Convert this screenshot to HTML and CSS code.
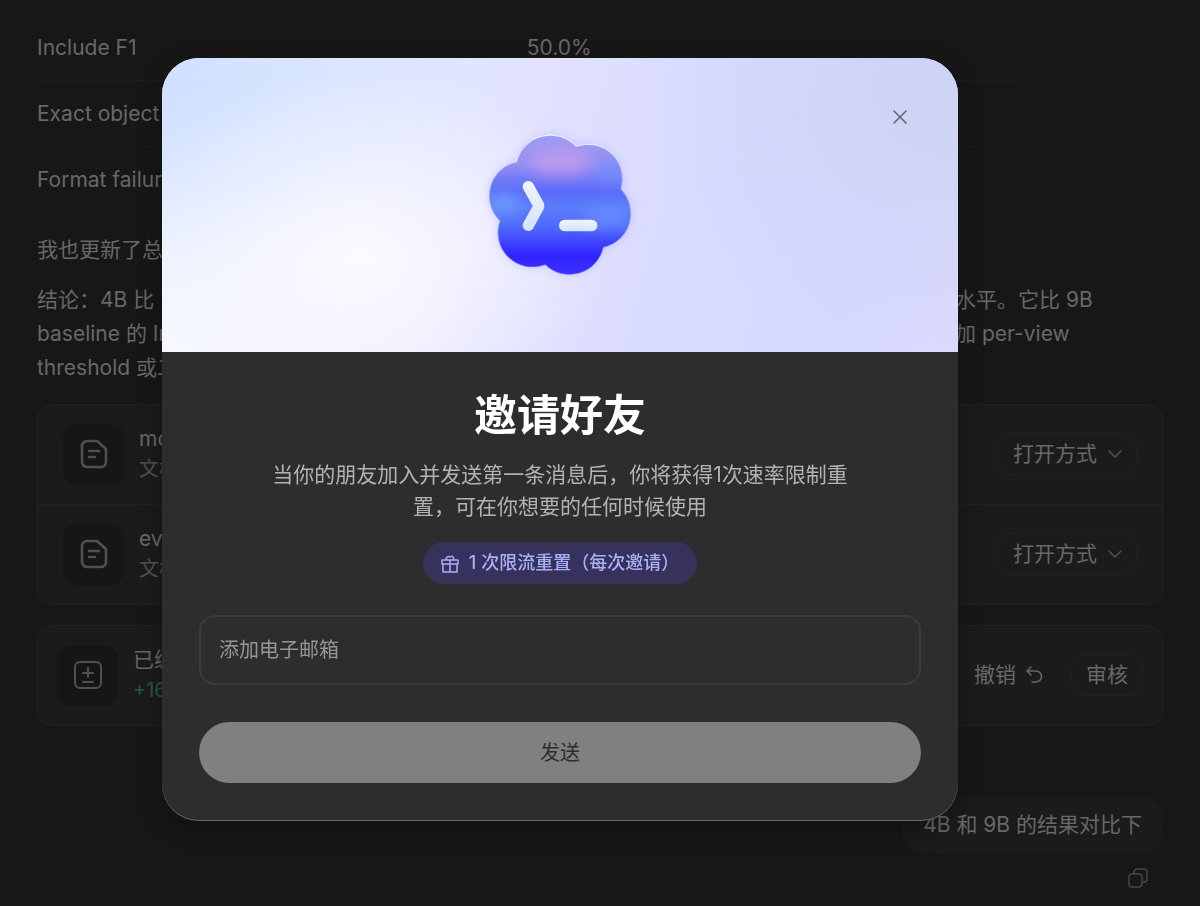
FILE: index.html
```html
<!DOCTYPE html>
<html lang="zh-CN">
  <head>
    <meta charset="UTF-8" />
    <meta name="viewport" content="width=device-width, initial-scale=1" />
    <title>邀请好友</title>
    <link rel="stylesheet" href="styles.css">
  </head>
  <body>
    <main class="chat">
      <table class="metrics">
        <tr><td>Include F1</td><td>50.0%</td></tr>
        <tr><td>Exact object</td><td></td></tr>
        <tr><td>Format failure</td><td></td></tr>
      </table>

      <p class="text">我也更新了总</p>
      <div class="text split">
        <span>结论：4B 比</span><span>水平。它比 9B</span>
        <span>baseline 的 In</span><span>加 per-view</span>
        <span>threshold 或二</span>
      </div>

      <div class="card">
        <div class="file">
          <div class="tile">
            <svg width="28" height="30" viewBox="0 0 28 30"><path d="M8 2h9l9 8v13a5 5 0 0 1-5 5H7a5 5 0 0 1-5-5V7a5 5 0 0 1 5-5zM9 12h10M9 18h6" /></svg>
          </div>
          <div class="file-name">mo<small>文档</small></div>
          <button class="btn" type="button">打开方式
            <svg class="thin" width="14" height="9" viewBox="0 0 14 9"><path d="M1 1l6 6 6-6" /></svg>
          </button>
        </div>
        <div class="file">
          <div class="tile">
            <svg width="28" height="30" viewBox="0 0 28 30"><path d="M8 2h9l9 8v13a5 5 0 0 1-5 5H7a5 5 0 0 1-5-5V7a5 5 0 0 1 5-5zM9 12h10M9 18h6" /></svg>
          </div>
          <div class="file-name">ev<small>文档</small></div>
          <button class="btn" type="button">打开方式
            <svg class="thin" width="14" height="9" viewBox="0 0 14 9"><path d="M1 1l6 6 6-6" /></svg>
          </button>
        </div>
      </div>

      <div class="card">
        <div class="file changes">
          <div class="tile">
            <svg width="28" height="28" viewBox="0 0 28 28"><rect x="1" y="1" width="26" height="26" rx="5" /><path d="M14 7v9M9 12h10M9 21h10" /></svg>
          </div>
          <div class="file-name">已编<small class="added">+16</small></div>
          <button class="undo" type="button">撤销
            <svg class="thin" width="18" height="18" viewBox="0 0 18 18"><path d="M6 1L2 5l4 4M2 5h9a5 5 0 0 1 0 11H7" /></svg>
          </button>
          <button class="btn" type="button">审核</button>
        </div>
      </div>

      <div class="message">4B 和 9B 的结果对比下</div>
      <button class="copy" type="button" aria-label="复制">
        <svg class="thin" width="20" height="20" viewBox="0 0 20 20"><rect x="1" y="6" width="13" height="13" rx="3" /><path d="M6 6V4a3 3 0 0 1 3-3h7a3 3 0 0 1 3 3v7a3 3 0 0 1-3 3h-2" /></svg>
      </button>
    </main>

    <div class="overlay">
      <form class="modal" role="dialog" aria-labelledby="title">
        <div class="hero">
          <button class="close" type="button" aria-label="关闭">
            <svg class="thin" width="14" height="14" viewBox="0 0 14 14"><path d="M1 1l12 12M13 1L1 13" /></svg>
          </button>
          <svg class="logo" width="200" height="190" viewBox="0 0 600 570">
            <defs>
              <linearGradient id="fill" x1="0" y1="75" x2="0" y2="495" gradientUnits="userSpaceOnUse">
                <stop offset="0" stop-color="#9b9df5" />
                <stop offset="0.2" stop-color="#9690f3" />
                <stop offset="0.4" stop-color="#5b6bf9" />
                <stop offset="0.52" stop-color="#5a7cfb" />
                <stop offset="0.66" stop-color="#5068fb" />
                <stop offset="0.86" stop-color="#3024ff" />
                <stop offset="1" stop-color="#3a30ff" />
              </linearGradient>
              <linearGradient id="edge" x1="0" y1="75" x2="0" y2="495" gradientUnits="userSpaceOnUse">
                <stop offset="0" stop-color="#fff" />
                <stop offset="0.3" stop-color="#c5d0ff" stop-opacity="0.8" />
                <stop offset="0.6" stop-color="#8ea6ff" stop-opacity="0.4" />
                <stop offset="1" stop-color="#7d7dff" stop-opacity="0.6" />
              </linearGradient>
              <linearGradient id="glyph" x1="0" y1="0" x2="0" y2="1">
                <stop offset="0" stop-color="#eef5ff" />
                <stop offset="1" stop-color="#d5e2f9" />
              </linearGradient>
              <filter id="soft" x="-100%" y="-150%" width="300%" height="400%"><feGaussianBlur stdDeviation="24" /></filter>
              <filter id="shadow" x="-20%" y="-20%" width="140%" height="140%"><feGaussianBlur stdDeviation="14" /></filter>
              <path id="flower" d="M170 155A104 104 0 0 1 348 109A104 104 0 0 1 483 238A104 104 0 0 1 430 412A104 104 0 0 1 256 464A104 104 0 0 1 120 332A104 104 0 0 1 170 155Z" />
              <clipPath id="clip"><use href="#flower" /></clipPath>
            </defs>
            <use href="#flower" fill="#7b7cf5" opacity="0.3" filter="url(#shadow)" />
            <use href="#flower" fill="url(#fill)" />
            <g clip-path="url(#clip)">
              <ellipse cx="300" cy="155" rx="95" ry="38" fill="#c79cec" opacity="0.8" filter="url(#soft)" />
              <ellipse cx="130" cy="280" rx="60" ry="32" fill="#749dff" opacity="0.8" filter="url(#soft)" />
              <ellipse cx="440" cy="320" rx="75" ry="28" fill="#6d95ff" opacity="0.8" filter="url(#soft)" />
              <ellipse cx="455" cy="185" rx="38" ry="30" fill="#6d8fff" filter="url(#soft)" />
            </g>
            <use href="#flower" fill="none" stroke="url(#edge)" stroke-width="3" />
            <path d="M205 213C211 213 217 216 220 222L250 276Q256 288 250 299L220 354A17 17 0 0 1 190 338L218 288L190 238A17 17 0 0 1 205 213Z" fill="url(#glyph)" />
            <rect x="297" y="329" width="115" height="35" rx="17" fill="url(#glyph)" />
          </svg>
        </div>
        <div class="content">
          <h1 id="title">邀请好友</h1>
          <p class="desc">当你的朋友加入并发送第一条消息后，你将获得1次速率限制重<br>置，可在你想要的任何时候使用</p>
          <div class="badge">
            <svg class="thin" width="18" height="19" viewBox="0 0 18 19"><path d="M1 6h16v4H1zM2 10v8h14v-8M9 6v12M9 6H6a2 2 0 1 1 3-3 2 2 0 1 1 3 3z" /></svg>
            1 次限流重置（每次邀请）
          </div>
          <input class="email" type="email" placeholder="添加电子邮箱" aria-label="添加电子邮箱" />
          <button class="send" type="submit" disabled>发送</button>
        </div>
      </form>
    </div>
  </body>
</html>
```
FILE: styles.css
```css
* {
  box-sizing: border-box;
}
body {
  margin: 0;
  background: #171717;
  color: #686868;
  font-family: "Inter", "Noto Sans CJK SC", sans-serif;
  font-size: 21px;
  line-height: 34px;
  overflow: hidden;
}
p,
h1 {
  margin: 0;
}
button,
input {
  font: inherit;
  color: inherit;
}
button {
  background: none;
  border: 0;
  padding: 0;
}
svg {
  display: block;
  flex: none;
  fill: none;
  stroke: currentColor;
  stroke-width: 2.6px;
  stroke-linecap: round;
  stroke-linejoin: round;
}
.thin {
  stroke-width: 1.5px;
}

/* conversation */
.chat {
  padding: 14px 37px;
}
.metrics {
  width: 87%;
  border-collapse: collapse;
  table-layout: fixed;
}
.metrics td {
  height: 66px;
  padding: 0;
  border-top: 1px solid #1c1c1c;
}
.text {
  margin-top: 20px;
}
.split {
  display: grid;
  grid-template-columns: 1fr 208px;
  margin-top: 16px;
  white-space: nowrap;
}
.card {
  margin-top: 19px;
  background: #1b1b1b;
  border: 1px solid #212121;
  border-radius: 14px;
}
.card + .card {
  margin-top: 20px;
}
.file {
  display: flex;
  align-items: center;
  height: 99px;
  padding: 0 25px;
}
.file + .file {
  height: 100px;
  border-top: 1px solid #212121;
}
.changes {
  padding: 0 19px;
}
.tile {
  display: flex;
  align-items: center;
  justify-content: center;
  width: 61px;
  height: 61px;
  border-radius: 14px;
  background: #161616;
  color: #505050;
}
.changes .tile svg {
  stroke-width: 2px;
}
.file-name {
  flex: 1;
  margin-left: 15px;
  line-height: 30px;
}
.file-name small {
  display: block;
  font-size: 20px;
  color: #505050;
}
.file-name .added {
  color: #23593a;
}
.btn {
  display: flex;
  align-items: center;
  gap: 11px;
  height: 42px;
  padding: 0 14px;
  border: 1px solid #212121;
  border-radius: 14px;
}
.btn svg {
  color: #505050;
}
.undo {
  display: flex;
  align-items: center;
  gap: 9px;
  margin-right: 28px;
}
.message {
  width: fit-content;
  margin: 71px 0 0 auto;
  padding: 11px 21px;
  border-radius: 20px;
  background: #1b1b1b;
}
.copy {
  display: block;
  margin: 15px 15px 0 auto;
  color: #454545;
}

/* invite dialog */
.overlay {
  position: fixed;
  inset: 0;
  display: flex;
  align-items: flex-start;
  justify-content: center;
  padding: 58px 80px 0 0;
}
.modal {
  width: 100%;
  max-width: 796px;
  border-radius: 37px;
  overflow: hidden;
  background: #2d2d2d;
  box-shadow: 0 1px 0 #666, 0 8px 24px rgba(0, 0, 0, 0.3);
}
.hero {
  position: relative;
  display: flex;
  justify-content: center;
  padding: 52px 0;
  background:
    radial-gradient(ellipse 260px 190px at 25% 68%, #fbfaff, rgba(251, 250, 255, 0)),
    radial-gradient(ellipse 320px 170px at 0% 100%, #f6f8ff, rgba(246, 248, 255, 0)),
    radial-gradient(ellipse 360px 280px at 2% 8%, #cfe0ff, rgba(207, 224, 255, 0)),
    radial-gradient(ellipse 320px 280px at 100% 10%, #ccd3f4, rgba(204, 211, 244, 0)),
    linear-gradient(105deg, #eaf0ff, #e6e7ff 35%, #dfdfff 50%, #d9dbff 65%, #d6d9ff 85%, #ddd9ff);
}
.logo {
  stroke: none;
}
.close {
  position: absolute;
  top: 43px;
  right: 42px;
  display: flex;
  align-items: center;
  justify-content: center;
  width: 32px;
  height: 32px;
  color: #61636f;
}
.content {
  display: flex;
  flex-direction: column;
  align-items: center;
  padding: 33px 37px 37px;
}
h1 {
  font-size: 43px;
  font-weight: 600;
  line-height: 60px;
  color: #fff;
}
.desc {
  margin-top: 14px;
  line-height: 32px;
  text-align: center;
  color: #b3b3b3;
}
.badge {
  display: flex;
  align-items: center;
  gap: 10px;
  height: 42px;
  margin-top: 19px;
  padding: 0 18px;
  border-radius: 21px;
  background: #37325b;
  color: #a9b0fb;
  font-size: 18px;
  font-weight: 500;
}
.email {
  width: 100%;
  height: 70px;
  margin-top: 31px;
  padding: 0 18px;
  border: 2px solid #3b3b3b;
  border-radius: 16px;
  background: none;
  font-size: 20px;
  color: #fff;
}
.email::placeholder {
  color: #969696;
}
.send {
  width: 100%;
  height: 61px;
  margin-top: 37px;
  border-radius: 31px;
  background: #808080;
  color: #2d2d2d;
  font-size: 20px;
}
```
